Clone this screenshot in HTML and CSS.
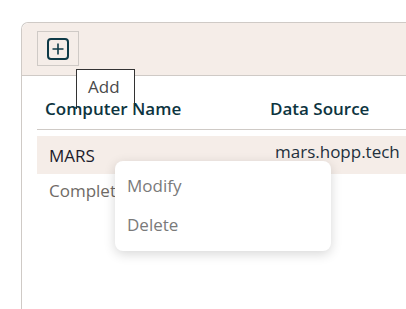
FILE: index.html
```html
<!DOCTYPE html>
<html>
<head>
<meta charset="utf-8">
<link rel="stylesheet" href="styles.css">
</head>
<body>
<div class="card">
  <div class="toolbar">
    <button class="add-btn" aria-label="Add">
      <svg width="22" height="22" viewBox="0 0 22 22"><rect x="1" y="1" width="20" height="20" rx="3" fill="none" stroke="#0e3a47" stroke-width="2"/><path d="M11 5.5v11M5.5 11h11" stroke="#0e3a47" stroke-width="1.6" fill="none"/></svg>
    </button>
    <div class="tooltip">Add</div>
  </div>
  <div class="table">
    <div class="thead">
      <div class="th c1">Computer Name</div>
      <div class="th c2">Data Source</div>
    </div>
    <div class="row sel">
      <div class="td c1 name">MARS</div>
      <div class="td c2 src">mars.hopp.tech</div>
    </div>
    <div class="row">
      <div class="td c1 status">Completed</div>
    </div>
  </div>
  <div class="menu">
    <div class="item">Modify</div>
    <div class="item">Delete</div>
  </div>
</div>
</body>
</html>
```
FILE: styles.css
```css
* { box-sizing: border-box; }
html, body { margin: 0; padding: 0; background: #fff; }
body {
  font-family: "Open Sans", "Noto Sans", sans-serif;
  width: 406px; height: 309px; overflow: hidden;
  padding: 22px 0 0 21px;
}
.card {
  position: relative;
  width: 385px;
  height: 287px;
  border: 1px solid #cfcac6;
  border-right: none;
  border-bottom: none;
  border-radius: 7px 0 0 0;
}
.toolbar {
  position: relative;
  background: #f5ede8;
  height: 53px;
  border-bottom: 1px solid #cfcac6;
  padding: 8px 0 0 15px;
  border-radius: 7px 0 0 0;
}
.add-btn {
  width: 42px; height: 35px;
  border: 1px solid #cfcac6;
  background: transparent;
  padding: 0;
  display: flex; align-items: center; justify-content: center;
}
.add-btn svg { display: block; }
.tooltip {
  position: absolute;
  left: 54px; top: 46px;
  width: 59px; height: 40px;
  background: #fff;
  border: 1px solid #333;
  border-bottom: none;
  color: #4a4a4a;
  font-size: 17px;
  padding: 5px 0 0 11px;
  line-height: 24px;
}
.table { margin-left: 15px; }
.thead {
  position: relative;
  display: flex;
  height: 54px;
  align-items: flex-end;
  padding-bottom: 9px;
  border-bottom: 1px solid #cfcac6;
}
.th {
  position: relative;
  font-weight: 600;
  font-size: 17px;
  color: #0d3440;
}
.c1 { width: 233px; padding-left: 8px; }
.c2 { flex: 1; }
.row { display: flex; }
.row.sel {
  margin-top: 6px;
  height: 38px;
  background: #f5ede8;
}
.td { font-size: 17px; }
.name { color: #1c1c2c; padding-left: 12px; padding-top: 8px; }
.src { color: #22303d; padding-left: 5px; padding-top: 4px; }
.status { color: #6f6a66; padding-left: 12px; padding-top: 5px; }
.menu {
  position: absolute;
  left: 93px; top: 138px;
  width: 216px; height: 90px;
  background: #fff;
  border-radius: 8px;
  box-shadow: 0 3px 12px rgba(0,0,0,0.16);
  padding-top: 12px;
}
.item {
  color: #7a7a7a;
  font-size: 17px;
  padding-left: 12px;
  height: 39px;
  line-height: 26px;
}
```
